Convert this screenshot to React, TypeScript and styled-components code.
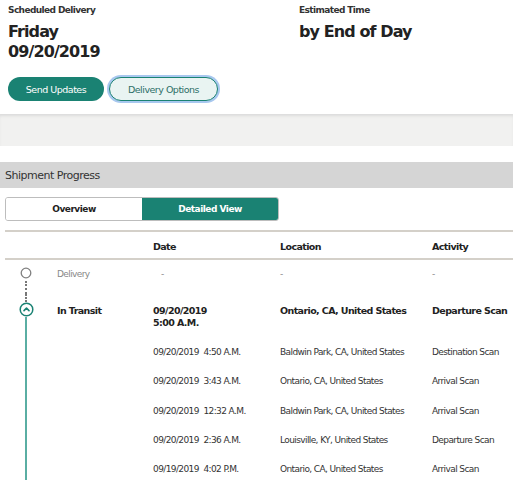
import React from 'react';
import styled, { createGlobalStyle } from 'styled-components';

const teal = '#1a8273';

const GlobalStyle = createGlobalStyle`
  html, body {
    margin: 0;
    padding: 0;
    background: #fff;
  }
  body {
    font-family: "DejaVu Sans", Verdana, sans-serif;
    color: #222;
  }
`;

const Page = styled.div`
  width: 513px;
  overflow: hidden;
`;

const Summary = styled.section`
  display: grid;
  grid-template-columns: 291px 1fr;
  padding: 4px 8px 0;
`;

const Label = styled.div`
  font-size: 9px;
  font-weight: bold;
  letter-spacing: -0.6px;
  color: #333;
  line-height: 12px;
`;

const BigValue = styled.div`
  margin-top: 6px;
  font-size: 16px;
  font-weight: bold;
  letter-spacing: -0.9px;
  line-height: 20px;
  color: #222;
`;

const Actions = styled.div`
  display: flex;
  gap: 3px;
  margin-top: 15px;
  grid-column: 1 / -1;
`;

const Pill = styled.button<{ $primary?: boolean }>`
  height: 24px;
  padding: 0;
  width: ${({ $primary }) => ($primary ? '96px' : '109px')};
  border-radius: 12px;
  font-family: inherit;
  font-size: 9.5px;
  letter-spacing: -0.5px;
  cursor: pointer;
  background: ${({ $primary }) => ($primary ? teal : '#e9f4f2')};
  color: ${({ $primary }) => ($primary ? '#fff' : '#2d6f67')};
  border: ${({ $primary }) => ($primary ? 'none' : `1px solid ${teal}`)};
  box-shadow: ${({ $primary }) => ($primary ? 'none' : '0 0 0 2px #a8c8ef')};
  margin-left: ${({ $primary }) => ($primary ? '0' : '2px')};
`;

const Band = styled.div`
  margin-top: 13px;
  height: 32px;
  background: #f1f1f0;
  box-shadow: inset 0 3px 3px -1px #dcdcdb;
`;

const SectionBar = styled.div`
  margin-top: 16px;
  height: 26px;
  background: #d5d5d5;
  display: flex;
  align-items: center;
  padding-left: 5px;
  font-size: 11px;
  letter-spacing: -0.5px;
  color: #333;
`;

const Tabs = styled.div`
  display: flex;
  width: 274px;
  height: 24px;
  margin: 9px 0 0 5px;
  border: 1px solid #bdbdbd;
  border-radius: 3px;
  overflow: hidden;
  box-sizing: border-box;
`;

const Tab = styled.div<{ $active?: boolean }>`
  flex: 1;
  display: flex;
  align-items: center;
  justify-content: center;
  font-size: 9px;
  font-weight: bold;
  letter-spacing: -0.5px;
  background: ${({ $active }) => ($active ? teal : '#fff')};
  color: ${({ $active }) => ($active ? '#fff' : '#222')};
`;

const Table = styled.div`
  margin: 9px 0 0 5px;
  border-top: 2px solid #d4d0c9;
`;

const Row = styled.div<{ $h: number; $pt: number; $head?: boolean }>`
  display: grid;
  grid-template-columns: 52px 96px 127px 152px 1fr;
  height: ${({ $h }) => $h}px;
  box-sizing: border-box;
  border-bottom: ${({ $head }) => ($head ? '2px solid #d4d0c9' : 'none')};
  & > div:not(:first-child) {
    padding-top: ${({ $pt }) => $pt}px;
  }
`;

const Cell = styled.div<{ $bold?: boolean; $muted?: boolean; $pre?: boolean }>`
  font-size: ${({ $bold }) => ($bold ? '9.5px' : '9px')};
  font-weight: ${({ $bold }) => ($bold ? 'bold' : 'normal')};
  letter-spacing: -0.6px;
  line-height: 12px;
  color: ${({ $muted, $bold }) => ($muted ? '#888' : $bold ? '#222' : '#333')};
  white-space: ${({ $pre }) => ($pre ? 'pre' : 'nowrap')};
`;

const Dash = styled(Cell)`
  padding-left: 8px;
`;

const Track = styled.div`
  display: flex;
  flex-direction: column;
  align-items: center;
  width: 42px;
`;

const Dotted = styled.div<{ $h?: number }>`
  width: 0;
  border-left: 2px dotted #777;
  flex: ${({ $h }) => ($h ? 'none' : '1')};
  height: ${({ $h }) => ($h ? `${$h}px` : 'auto')};
  margin-top: ${({ $h }) => ($h ? '0' : '2px')};
`;

const Line = styled.div`
  width: 2px;
  flex: 1;
  background: #5aaea3;
`;

const Gap = styled.div<{ $h: number }>`
  height: ${({ $h }) => $h}px;
  flex: none;
`;

const Circle = () => (
  <svg width="12" height="12" viewBox="0 0 12 12">
    <circle cx="6" cy="6" r="4.8" fill="none" stroke="#808080" strokeWidth="1.3" />
  </svg>
);

const ActiveCircle = () => (
  <svg width="15" height="15" viewBox="0 0 15 15">
    <circle cx="7.5" cy="7.5" r="6.3" fill="#fff" stroke={teal} strokeWidth="1.5" />
    <path d="M5 8.6 L7.5 6.1 L10 8.6" fill="none" stroke={teal} strokeWidth="1.6" strokeLinecap="round" strokeLinejoin="round" />
  </svg>
);

const history = [
  { date: '09/20/2019  4:50 A.M.', location: 'Baldwin Park, CA, United States', activity: 'Destination Scan' },
  { date: '09/20/2019  3:43 A.M.', location: 'Ontario, CA, United States', activity: 'Arrival Scan' },
  { date: '09/20/2019  12:32 A.M.', location: 'Baldwin Park, CA, United States', activity: 'Arrival Scan' },
  { date: '09/20/2019  2:36 A.M.', location: 'Louisville, KY, United States', activity: 'Departure Scan' },
  { date: '09/19/2019  4:02 P.M.', location: 'Ontario, CA, United States', activity: 'Arrival Scan' },
];

export default function App() {
  return (
    <Page>
      <GlobalStyle />
      <Summary>
        <div>
          <Label>Scheduled Delivery</Label>
          <BigValue>
            Friday
            <br />
            09/20/2019
          </BigValue>
        </div>
        <div>
          <Label>Estimated Time</Label>
          <BigValue>by End of Day</BigValue>
        </div>
        <Actions>
          <Pill $primary>Send Updates</Pill>
          <Pill>Delivery Options</Pill>
        </Actions>
      </Summary>

      <Band />

      <SectionBar>Shipment Progress</SectionBar>

      <Tabs>
        <Tab>Overview</Tab>
        <Tab $active>Detailed View</Tab>
      </Tabs>

      <Table>
        <Row $head $h={28} $pt={9}>
          <div />
          <div />
          <Cell $bold>Date</Cell>
          <Cell $bold>Location</Cell>
          <Cell $bold>Activity</Cell>
        </Row>

        <Row $h={34} $pt={8}>
          <Track>
            <Gap $h={7} />
            <Circle />
            <Dotted />
          </Track>
          <Cell $muted>Delivery</Cell>
          <Dash $muted>-</Dash>
          <Cell $muted>-</Cell>
          <Cell $muted>-</Cell>
        </Row>

        <Row $h={41} $pt={11}>
          <Track>
            <Dotted $h={8} />
            <ActiveCircle />
            <Line />
          </Track>
          <Cell $bold>In Transit</Cell>
          <Cell $bold>
            09/20/2019
            <br />
            5:00 A.M.
          </Cell>
          <Cell $bold>Ontario, CA, United States</Cell>
          <Cell $bold>Departure Scan</Cell>
        </Row>

        {history.map((h) => (
          <Row key={h.date} $h={29.3} $pt={11}>
            <Track>
              <Line />
            </Track>
            <div />
            <Cell $pre>{h.date}</Cell>
            <Cell>{h.location}</Cell>
            <Cell>{h.activity}</Cell>
          </Row>
        ))}
      </Table>
    </Page>
  );
}
